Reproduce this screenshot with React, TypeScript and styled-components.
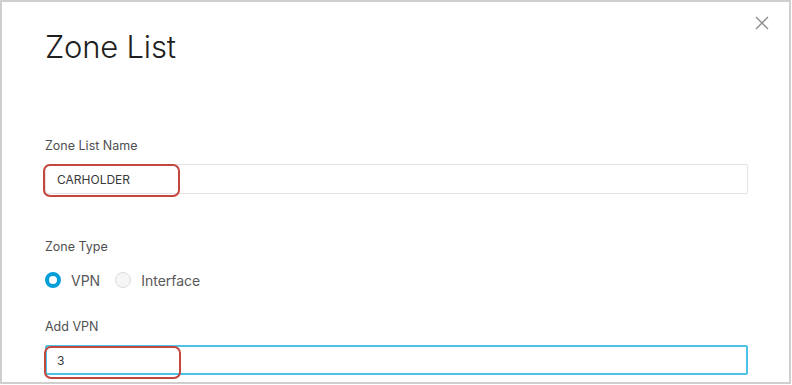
import React from "react";
import styled, { createGlobalStyle } from "styled-components";

const Global = createGlobalStyle`
  html, body { margin: 0; padding: 0; background: #ffffff; }
  body { font-family: Inter, "Open Sans", Arial, sans-serif; }
`;

const Frame = styled.div`
  box-sizing: border-box;
  width: 791px;
  height: 384px;
  border: 2px solid #cfcfcf;
  background: #fff;
  padding: 0 43px 0 43px;
  display: flex;
  flex-direction: column;
  position: relative;
  overflow: hidden;
`;

const Header = styled.div`
  display: flex;
  justify-content: space-between;
  align-items: flex-start;
  height: 136px;
`;

const Title = styled.h1`
  margin: 23px 0 0 0;
  font-family: Inter, sans-serif;
  font-weight: 300;
  font-size: 31px;
  line-height: 44px;
  color: #1f1f1f;
  letter-spacing: -0.2px;
`;

const Close = styled.button`
  border: 0;
  background: transparent;
  padding: 0;
  margin: 13px -24px 0 0;
  width: 16px;
  height: 16px;
  display: flex;
  cursor: pointer;
`;

const Field = styled.div<{ $gap: number }>`
  display: flex;
  flex-direction: column;
  margin-bottom: ${(p) => p.$gap}px;
`;

const Label = styled.div`
  font-family: Inter, sans-serif;
  font-size: 12.5px;
  color: #4f4f52;
  line-height: 16px;
  margin-bottom: 10px;
`;

const InputBox = styled.div<{ $focused?: boolean }>`
  position: relative;
  box-sizing: border-box;
  width: 703px;
  height: 30px;
  border: ${(p) => (p.$focused ? "2px solid #4cc2e6" : "1px solid #e3e3e3")};
  border-radius: 2px;
  display: flex;
  align-items: center;
  padding-left: ${(p) => (p.$focused ? 10 : 11)}px;
  font-family: Inter, sans-serif;
  font-size: 12px;
  color: #39393b;
`;

const Highlight = styled.div`
  position: absolute;
  left: -3px;
  top: -1px;
  width: 137px;
  height: 33px;
  box-sizing: border-box;
  border: 2px solid #c4473f;
  border-radius: 7px;
  pointer-events: none;
`;

const RadioRow = styled.div`
  display: flex;
  align-items: center;
  gap: 10px;
  height: 18px;
  margin-top: 6px;
`;

const RadioItem = styled.label`
  display: flex;
  align-items: center;
  gap: 10px;
  margin-right: 5px;
  font-family: Inter, sans-serif;
  font-size: 14px;
  color: #58585b;
`;

const RadioDot = styled.span<{ $checked?: boolean }>`
  box-sizing: border-box;
  width: 16px;
  height: 16px;
  border-radius: 50%;
  border: ${(p) => (p.$checked ? "4px solid #049fd9" : "1px solid #dcdcdc")};
  background: ${(p) => (p.$checked ? "#fff" : "#f6f6f6")};
`;

export default function App() {
  return (
    <>
      <Global />
      <Frame>
        <Header>
          <Title>Zone List</Title>
          <Close aria-label="Close">
            <svg width="16" height="16" viewBox="0 0 16 16">
              <path d="M2 2 L14 14 M14 2 L2 14" stroke="#8a8a8a" strokeWidth="1.3" />
            </svg>
          </Close>
        </Header>
        <Field $gap={45}>
          <Label>Zone List Name</Label>
          <InputBox>
            CARHOLDER
            <Highlight />
          </InputBox>
        </Field>
        <Field $gap={30}>
          <Label>Zone Type</Label>
          <RadioRow>
            <RadioItem>
              <RadioDot $checked />
              VPN
            </RadioItem>
            <RadioItem>
              <RadioDot />
              Interface
            </RadioItem>
          </RadioRow>
        </Field>
        <Field $gap={0}>
          <Label>Add VPN</Label>
          <InputBox $focused>
            3
            <Highlight />
          </InputBox>
        </Field>
      </Frame>
    </>
  );
}
